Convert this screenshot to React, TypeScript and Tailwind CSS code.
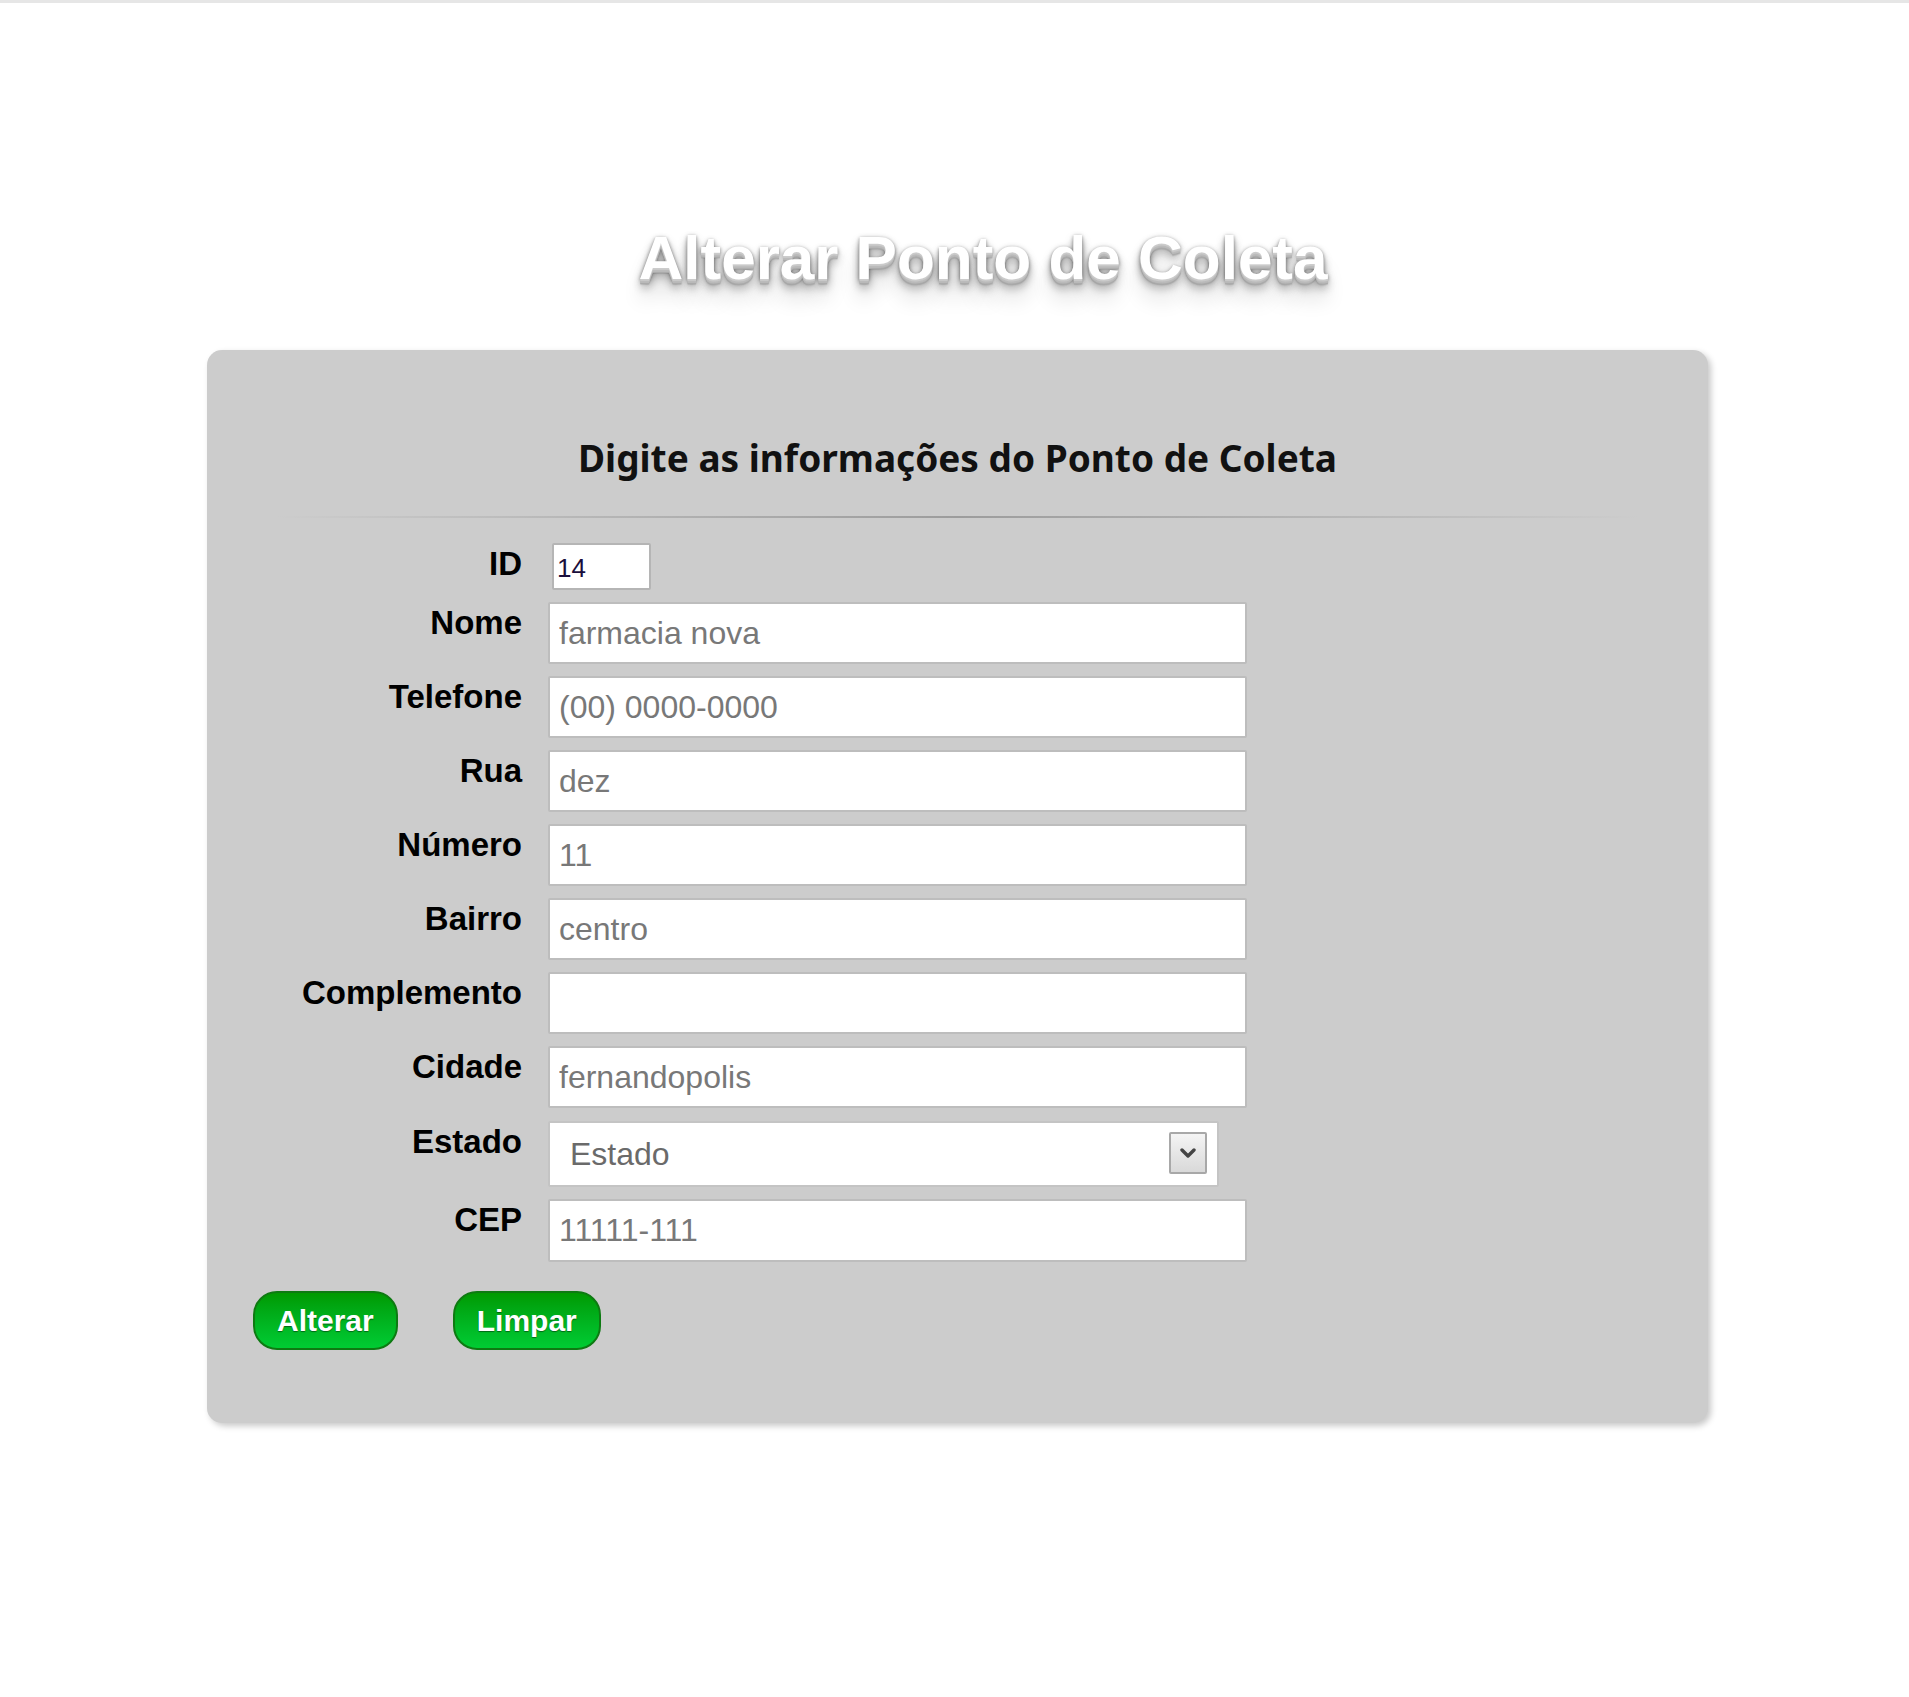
import React from "react";

const campos = [
  { label: "Nome", value: "farmacia nova" },
  { label: "Telefone", value: "", placeholder: "(00) 0000-0000" },
  { label: "Rua", value: "dez" },
  { label: "Número", value: "11" },
  { label: "Bairro", value: "centro" },
  { label: "Complemento", value: "" },
  { label: "Cidade", value: "fernandopolis" },
];

const inputCls =
  "h-[62px] w-[699px] rounded-[2px] border-2 border-[#bdbdbd] bg-white px-[9px] text-[32px] text-[#787878] placeholder:text-[#787878] outline-none font-['Liberation_Sans',Arial,sans-serif]";

const Label: React.FC<{ children: React.ReactNode }> = ({ children }) => (
  <label className="w-[269px] shrink-0 pt-[2px] text-right text-[33px] leading-[37px] font-bold text-black font-['Liberation_Sans',Arial,sans-serif]">
    {children}
  </label>
);

const Botao: React.FC<{ children: React.ReactNode }> = ({ children }) => (
  <button className="h-[59px] rounded-[24px] border-2 border-[#0e7a12] bg-linear-to-b from-[#009a00] to-[#00cc33] px-[22px] text-[30px] font-bold text-white [text-shadow:0_1px_1px_rgba(0,0,0,0.45)] font-['Liberation_Sans',Arial,sans-serif]">
    {children}
  </button>
);

export default function App() {
  return (
    <div className="min-h-[1697px] w-full bg-white">
      <div className="h-[3px] w-full bg-[#e6e6e6]" />

      <h1 className="mt-[224px] pl-[57px] text-center text-[62px] leading-[62px] font-bold text-white font-['Liberation_Sans',Arial,sans-serif] [text-shadow:0_1px_0_#ccc,0_2px_0_#c9c9c9,0_3px_0_#bbb,0_4px_0_#b9b9b9,0_5px_0_#aaa,0_6px_1px_rgba(0,0,0,.1),0_0_5px_rgba(0,0,0,.1),0_1px_3px_rgba(0,0,0,.3),0_3px_5px_rgba(0,0,0,.2),0_5px_10px_rgba(0,0,0,.25),0_10px_10px_rgba(0,0,0,.2),0_20px_20px_rgba(0,0,0,.15)]">
        Alterar Ponto de Coleta
      </h1>

      <div className="mt-[61px] ml-[207px] w-[1501px] rounded-[15px] bg-[#cccccc] pt-[86px] pb-[73px] pl-[46px] shadow-[3px_3px_6px_rgba(0,0,0,0.22)]">
        <h2 className="-ml-[46px] text-center text-[37px] leading-[44px] font-bold text-[#111] font-['Noto_Sans','DejaVu_Sans',sans-serif]">
          Digite as informações do Ponto de Coleta
        </h2>

        <div className="-ml-[46px] mt-[36px] flex justify-center">
          <div className="h-[2px] w-[1363px] bg-linear-to-r from-transparent via-[#9c9c9c] to-transparent" />
        </div>

        <form className="mt-[25px] flex flex-col gap-[12px]">
          <div className="flex gap-[26px]">
            <Label>ID</Label>
            <input
              defaultValue="14"
              className="ml-[4px] h-[47px] w-[99px] rounded-[2px] border-2 border-[#b5b5b5] bg-white px-[3px] pt-[4px] text-[26px] text-[#1a0e3c] outline-none font-['Liberation_Sans',Arial,sans-serif]"
            />
          </div>

          {campos.map((c) => (
            <div key={c.label} className="flex gap-[26px]">
              <Label>{c.label}</Label>
              <input
                defaultValue={c.value}
                placeholder={c.placeholder}
                className={inputCls}
              />
            </div>
          ))}

          <div className="mt-[1px] flex gap-[26px]">
            <Label>Estado</Label>
            <div className="relative">
              <select
                defaultValue=""
                className="h-[66px] w-[671px] appearance-none rounded-[2px] border-2 border-[#c4c4c4] bg-white pl-[20px] text-[32px] text-[#6a6a6a] outline-none font-['Liberation_Sans',Arial,sans-serif]"
              >
                <option value="">Estado</option>
                <option value="SP">SP</option>
              </select>
              <div className="pointer-events-none absolute top-[11px] right-[12px] flex h-[42px] w-[38px] items-center justify-center rounded-[2px] border-2 border-[#a8a8a8] bg-linear-to-b from-[#f4f4f4] to-[#d9d9d9]">
                <svg width="16" height="12" viewBox="0 0 16 12">
                  <path d="M2 3 L8 9 L14 3" fill="none" stroke="#444" strokeWidth="3.4" strokeLinecap="round" strokeLinejoin="round" />
                </svg>
              </div>
            </div>
          </div>

          <div className="flex gap-[26px]">
            <Label>CEP</Label>
            <input defaultValue="11111-111" className={inputCls + " h-[63px]"} />
          </div>

          <div className="mt-[17px] flex gap-[55px]">
            <Botao>Alterar</Botao>
            <Botao>Limpar</Botao>
          </div>
        </form>
      </div>
    </div>
  );
}
